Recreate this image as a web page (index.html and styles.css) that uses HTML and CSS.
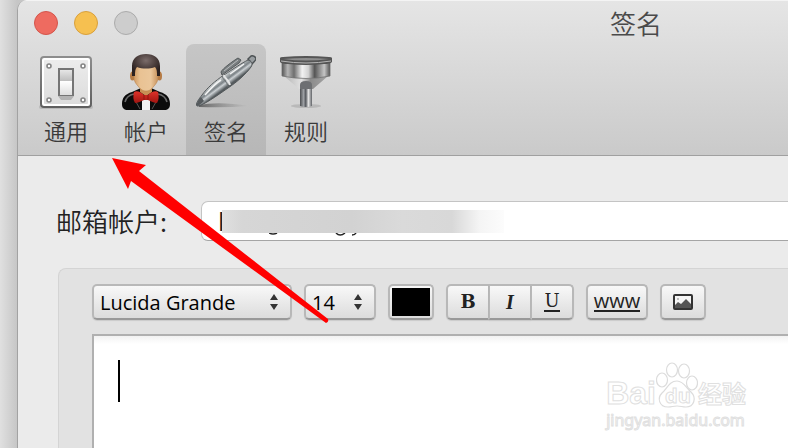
FILE: index.html
```
<!DOCTYPE html>
<html lang="zh-CN">

<head>
  <meta charset="UTF-8">
  <meta name="viewport" content="width=device-width, initial-scale=1.0">
  <title>签名</title>
  <link rel="stylesheet" href="styles.css">
</head>

<body>
  <div class="window">
    <header class="header">
      <div class="titlebar">
        <div class="lights">
          <button class="light close" aria-label="关闭"></button>
          <button class="light minimize" aria-label="最小化"></button>
          <button class="light zoom" aria-label="缩放" disabled></button>
        </div>
        <h1 class="title">签名</h1>
      </div>
      <nav class="tabs">
        <button class="tab">
          <svg class="tab-icon" viewBox="0 0 60 60" aria-hidden="true">
            <defs>
              <linearGradient id="plate" x1="0" y1="0" x2="0" y2="1">
                <stop offset="0" stop-color="#ececec"/>
                <stop offset="1" stop-color="#dcdcdc"/>
              </linearGradient>
              <linearGradient id="plateEdge" x1="0" y1="0" x2="0" y2="1">
                <stop offset="0" stop-color="#8d8d8d"/>
                <stop offset="1" stop-color="#5f5f5f"/>
              </linearGradient>
              <linearGradient id="lever" x1="0" y1="0" x2="0" y2="1">
                <stop offset="0" stop-color="#e6e6e6"/>
                <stop offset=".44" stop-color="#bdbdbd"/>
                <stop offset=".45" stop-color="#fff"/>
                <stop offset="1" stop-color="#dedede"/>
              </linearGradient>
            </defs>
            <rect x="3" y="53" width="54" height="4" rx="2" fill="#000" opacity=".12"/>
            <rect x="5" y="5" width="50" height="50" rx="3" fill="#fff" stroke="url(#plateEdge)" stroke-width="2"/>
            <rect x="8" y="8" width="44" height="44" rx="1" fill="url(#plate)"/>
            <g fill="#fff" stroke="#858585" stroke-width="1.6">
              <circle cx="13" cy="14" r="2"/>
              <circle cx="47" cy="14" r="2"/>
              <circle cx="13" cy="48" r="2"/>
              <circle cx="47" cy="48" r="2"/>
            </g>
            <path d="M22 44h16l-3 4H25z" fill="#888" opacity=".5"/>
            <rect x="22" y="16" width="16" height="28" fill="#757575"/>
            <rect x="24" y="18" width="12" height="25" fill="url(#lever)"/>
          </svg>
          <span>通用</span>
        </button>
        <button class="tab">
          <svg class="tab-icon" viewBox="0 0 60 60" aria-hidden="true">
            <defs>
              <linearGradient id="skin" x1="0" y1="0" x2="1" y2="0">
                <stop offset="0" stop-color="#d09a62"/>
                <stop offset=".25" stop-color="#e9c293"/>
                <stop offset=".7" stop-color="#ebc79b"/>
                <stop offset="1" stop-color="#c8935d"/>
              </linearGradient>
              <radialGradient id="hair" cx=".5" cy=".3" r=".6">
                <stop offset="0" stop-color="#7b6c6a"/>
                <stop offset=".6" stop-color="#4a3d3b"/>
                <stop offset="1" stop-color="#2b2120"/>
              </radialGradient>
              <linearGradient id="bow" x1="0" y1="0" x2="0" y2="1">
                <stop offset="0" stop-color="#de3229"/>
                <stop offset="1" stop-color="#a01511"/>
              </linearGradient>
            </defs>
            <path d="M6 52c0-6 3-10 10-12l9-4h10l9 4c7 2 10 6 10 12 0 4-2 6-6 6H12c-4 0-6-2-6-6z" fill="#0b0b0b"/>
            <path d="M9 50c1-4 4-7 9-8M51 50c-1-4-4-7-9-8" fill="none" stroke="#696969" stroke-width="1.5"/>
            <path d="M20 50l4 7M40 50l-4 7" stroke="#555" stroke-width="1"/>
            <path d="M26 47h8v11h-8z" fill="#f2f2f2"/>
            <path d="M24 31h12v9l-6 4-6-4z" fill="#c98f55"/>
            <ellipse cx="16.5" cy="24" rx="2.5" ry="4.5" fill="#b57b45"/>
            <ellipse cx="43.5" cy="24" rx="2.5" ry="4.5" fill="#b57b45"/>
            <path d="M18 13h24v13c0 3-2 6-4 8-3 4-5 5-8 5s-5-1-8-5c-2-2-4-5-4-8z" fill="url(#skin)" stroke="#b9834c" stroke-width=".6"/>
            <path d="M16 24V14C16 6 22 2 30 2s14 4 14 12v10h-3c0-4 0-7-2-9-5 2-13 2-18 0-2 2-2 5-2 9z" fill="url(#hair)"/>
            <path d="M18 40c3-2 8 1 10 3h4c2-2 7-5 10-3 1 4 1 8-1 11-3 0-6-2-9-3h-4c-3 1-6 3-9 3-2-3-2-7-1-11z" fill="url(#bow)"/>
            <path d="M28 43v5M32 43v5" stroke="#8f1511" stroke-width="1"/>
          </svg>
          <span>帐户</span>
        </button>
        <button class="tab active" aria-current="page">
          <svg class="tab-icon" viewBox="0 0 60 60" aria-hidden="true">
            <defs>
              <linearGradient id="metal" x1="21" y1="21" x2="33" y2="37" gradientUnits="userSpaceOnUse">
                <stop offset="0" stop-color="#73787a"/>
                <stop offset=".25" stop-color="#dfe2e3"/>
                <stop offset=".42" stop-color="#a6acae"/>
                <stop offset=".55" stop-color="#7c8387"/>
                <stop offset=".66" stop-color="#ccd1d4"/>
                <stop offset=".85" stop-color="#555b5e"/>
              </linearGradient>
              <linearGradient id="penShadow" x1="0" y1="0" x2="1" y2="0">
                <stop offset="0" stop-color="#666"/>
                <stop offset="1" stop-color="#888" stop-opacity="0"/>
              </linearGradient>
            </defs>
            <path d="M3 53q20-4 50 1-24 2-50 1z" fill="url(#penShadow)"/>
            <path d="M25 20C26 17 37 9 42 6l3 2-2 3-17 12z" fill="#797e80" stroke="#555a5c" stroke-width="1"/>
            <path d="M28 19L42 8" stroke="#b9bcbd" stroke-width="1"/>
            <path d="M52 7l3-3c2-1 5 1 5 3 0 1-1 2-4 5z" fill="#989da0" stroke="#4d5254" stroke-width="1.5"/>
            <path d="M1 54c-2-2 2-7 5-11 5-7 13-14 22-20 9-6 18-12 24-15 4 1 5 4 3 7-5 7-14 15-23 21C22 43 5 55 1 54z" fill="url(#metal)" stroke="#54595b" stroke-width="1"/>
            <path d="M28 23c0 4 5 4 6 10" fill="none" stroke="#e5e6e6" stroke-width="2"/>
            <path d="M26 24c1 4 5 5 6 11" fill="none" stroke="#6a6f71" stroke-width="1"/>
            <path d="M1 54c-1-2 1-5 4-9l3 4c-3 3-6 5-7 5z" fill="#565b5e"/>
            <path d="M9 43C16 35 20 31 25 28M34 22l14-10" fill="none" stroke="#f2f3f3" stroke-width="1.5"/>
          </svg>
          <span>签名</span>
        </button>
        <button class="tab">
          <svg class="tab-icon" viewBox="0 0 60 60" aria-hidden="true">
            <defs>
              <linearGradient id="steel" x1="0" y1="0" x2="1" y2="0">
                <stop offset="0" stop-color="#555"/>
                <stop offset=".12" stop-color="#b5b5b5"/>
                <stop offset=".25" stop-color="#6e6e6e"/>
                <stop offset=".42" stop-color="#f2f2f2"/>
                <stop offset=".55" stop-color="#d2d2d2"/>
                <stop offset=".68" stop-color="#555"/>
                <stop offset=".88" stop-color="#c5c5c5"/>
                <stop offset="1" stop-color="#555"/>
              </linearGradient>
              <linearGradient id="cone" x1="0" y1="0" x2="1" y2="0">
                <stop offset="0" stop-color="#b5b5b5"/>
                <stop offset=".4" stop-color="#e2e2e2"/>
                <stop offset=".6" stop-color="#8b8b8b"/>
                <stop offset="1" stop-color="#a5a5a5"/>
              </linearGradient>
              <linearGradient id="pipe" x1="0" y1="0" x2="1" y2="0">
                <stop offset="0" stop-color="#4b4d50"/>
                <stop offset=".3" stop-color="#9da0a4"/>
                <stop offset=".48" stop-color="#55585d"/>
                <stop offset=".7" stop-color="#e5e5e5"/>
                <stop offset="1" stop-color="#606367"/>
              </linearGradient>
            </defs>
            <ellipse cx="30" cy="54" rx="15" ry="2" fill="#000" opacity=".12"/>
            <path d="M8 24q22 5 44 0L37 37H23z" fill="url(#cone)"/>
            <path d="M24 33q0-4 6-4t6 4v5H24z" fill="#6d6f72"/>
            <path d="M24 37h12v17q-6 2-12 0z" fill="url(#pipe)"/>
            <path d="M6 10h48v14q-24 5-48 0z" fill="url(#steel)" stroke="#707070" stroke-width=".8"/>
            <path d="M4 6q0-1 3-1 23-2 46 0 3 0 3 1v4q-2 2-8 2-18 2-36 0-6 0-8-2z" fill="#555"/>
            <path d="M7 7q23-2 46 0-23 3-46 0z" fill="#8e8e8e"/>
            <path d="M5 9q25 4 50 0" fill="none" stroke="#b5b5b5" stroke-width="1"/>
          </svg>
          <span>规则</span>
        </button>
      </nav>
    </header>

    <main class="content">
      <div class="account-row">
        <label for="account">邮箱帐户:</label>
        <div class="account-field">
          <input id="account" type="text" value="l">
          <span class="mask"></span>
          <svg class="descenders" viewBox="0 0 90 4" aria-hidden="true">
            <path d="M0 0q4 2 8 0M67 0q4 4 9 0M83 2q3 0 4-2" fill="none" stroke="#222" stroke-width="1.5"/>
          </svg>
        </div>
      </div>

      <section class="panel">
        <div class="toolbar">
          <div class="picker font-picker">
            <select aria-label="字体">
              <option>Lucida Grande</option>
            </select>
            <svg class="arrows" viewBox="0 0 10 18" aria-hidden="true">
              <path d="M5 1l4 6H1zM5 17l4-6H1z" fill="#333"/>
            </svg>
          </div>
          <div class="picker size-picker">
            <select aria-label="字号">
              <option>14</option>
            </select>
            <svg class="arrows" viewBox="0 0 10 18" aria-hidden="true">
              <path d="M5 1l4 6H1zM5 17l4-6H1z" fill="#333"/>
            </svg>
          </div>
          <button class="tool color" aria-label="文字颜色"><span class="swatch"></span></button>
          <div class="group">
            <button class="tool bold">B</button>
            <button class="tool italic">I</button>
            <button class="tool underline"><span>U</span></button>
          </div>
          <button class="tool link"><span>www</span></button>
          <button class="tool image" aria-label="插入图片">
            <svg width="20" height="16" viewBox="0 0 20 16" aria-hidden="true">
              <rect x="1" y="1" width="18" height="14" rx="1" fill="#f5f5f5" stroke="#333" stroke-width="2"/>
              <path d="M2 11l3-3 3 2 5-5 5 5v4H2z" fill="#555"/>
              <circle cx="5" cy="5" r="1" fill="#aaa"/>
            </svg>
          </button>
        </div>
        <div class="editor">
          <textarea aria-label="签名内容"></textarea>
          <span class="caret"></span>
        </div>
      </section>
    </main>
  </div>

  <svg class="pointer" viewBox="0 0 218 168" aria-hidden="true">
    <path d="M0 0L34 7l-7 6 189 148q1 3-2 4L19 23l-3 8z" fill="#f00"/>
  </svg>

  <div class="watermark">
    <div class="brand">
      <span class="brand-latin">Bai</span>
      <span class="paw">
        <svg viewBox="0 0 42 46" aria-hidden="true">
          <g fill="#fff" stroke="#dcdcdc" stroke-width="1.2">
            <ellipse cx="6" cy="18" rx="5.5" ry="7"/>
            <ellipse cx="16" cy="8" rx="5.5" ry="7"/>
            <ellipse cx="28" cy="9" rx="5.5" ry="7"/>
            <ellipse cx="36" cy="21" rx="5.5" ry="7"/>
            <path d="M21 19c7 0 9 7 14 11 6 6 3 15-5 15-4 0-5-1-9-1s-5 1-9 1c-9 0-11-9-6-14 5-4 7-12 15-12z"/>
          </g>
        </svg>
        <span class="paw-text">du</span>
      </span>
      <span class="brand-cjk">经验</span>
    </div>
    <div class="site">jingyan.baidu.com</div>
  </div>
</body>

</html>
```

FILE: styles.css
```
* {
  box-sizing: border-box;
}

body {
  margin: 0;
  height: 100vh;
  padding-left: 17px;
  overflow: hidden;
  position: relative;
  background: linear-gradient(to right, #e0e0e0 0, #c6c6c6 17px);
  font-family: "Open Sans", "Noto Sans CJK SC", sans-serif;
  color: #222;
}

button {
  margin: 0;
  padding: 0;
  border: none;
  background: none;
  font-family: inherit;
  color: inherit;
}

.window {
  display: flex;
  flex-direction: column;
  height: 100%;
  border-left: 1px solid #a2a2a2;
  border-top-left-radius: 10px;
  background: #ebebeb;
  overflow: hidden;
}

/* 标题栏和工具栏 */
.header {
  border-top: 1px solid #f4f4f4;
  border-bottom: 1px solid #a0a0a0;
  background: linear-gradient(#e5e5e5, #cacaca);
}

.titlebar {
  display: flex;
  align-items: center;
  justify-content: space-between;
  height: 43px;
  padding: 0 126px 0 16px;
}

.lights {
  display: flex;
  gap: 16px;
}

.light {
  width: 24px;
  height: 24px;
  border: 1px solid;
  border-radius: 50%;
}

.close {
  background: #ee6b60;
  border-color: #d4554b;
}

.minimize {
  background: #f6c050;
  border-color: #d9a03c;
}

.zoom {
  background: #cdcdcd;
  border-color: #ababab;
}

.title {
  margin: 0;
  font-family: "Noto Sans CJK SC", sans-serif;
  font-size: 26px;
  font-weight: 350;
  line-height: 40px;
  color: #4a4a4a;
}

.tabs {
  display: flex;
  padding-left: 8px;
}

.tab {
  display: flex;
  flex-direction: column;
  align-items: center;
  width: 80px;
  height: 111px;
  padding-top: 8px;
  border-radius: 8px 8px 0 0;
  font-family: "Noto Sans CJK SC", sans-serif;
  font-size: 22px;
  font-weight: 350;
  line-height: 36px;
  color: #3a3a3a;
}

.tab.active {
  background: linear-gradient(#c6c6c6, #b7b7b7);
}

.tab-icon {
  width: 60px;
  height: 60px;
}

/* 内容区 */
.content {
  display: flex;
  flex-direction: column;
  flex: 1;
  padding: 45px 0 0 38px;
}

.account-row {
  display: flex;
  align-items: center;
  gap: 34px;
}

.account-row label {
  font-family: "Noto Sans CJK SC", sans-serif;
  font-size: 26px;
  font-weight: 350;
  line-height: 40px;
}

.account-field {
  flex: 1;
  position: relative;
}

.account-field input {
  display: block;
  width: 100%;
  height: 40px;
  padding: 0 16px;
  border: 1px solid #c4c4c4;
  border-right: none;
  border-bottom-color: #a5a5a5;
  border-radius: 7px 0 0 7px;
  background: #fff;
  font-family: "Open Sans", sans-serif;
  font-size: 26px;
  color: #222;
  outline: none;
}

.mask {
  position: absolute;
  left: 21px;
  top: 9px;
  width: 282px;
  height: 23px;
  background: linear-gradient(to right, #e0e0e0 0, #d6d6d6 20px, #d2d2d2 130px, #dadada 180px, #d8d8d8 230px, #f5f5f5 258px, #fcfcfc 282px);
}

.descenders {
  position: absolute;
  left: 68px;
  top: 32px;
  width: 90px;
  height: 4px;
}

.panel {
  display: flex;
  flex-direction: column;
  flex: 1;
  margin: 27px 0 0 2px;
  padding: 15px 0 0 33px;
  border: 1px solid #d4d4d4;
  border-width: 1px 0 0 1px;
  border-top-left-radius: 8px;
  background: #e2e2e2;
}

.toolbar {
  display: flex;
  gap: 12px;
  margin-bottom: 14px;
}

.picker {
  position: relative;
}

.font-picker {
  width: 200px;
}

.size-picker {
  width: 72px;
}

.picker select,
.tool {
  height: 36px;
  border: 2px solid #b8b8b8;
  border-bottom-color: #999;
  border-radius: 5px;
  background: linear-gradient(#f8f8f8, #dcdcdc);
  box-shadow: 0 1px 1px rgba(0, 0, 0, 0.1);
}

.picker select {
  display: block;
  width: 100%;
  padding: 0 0 0 6px;
  appearance: none;
  font-family: "Open Sans", sans-serif;
  font-size: 20px;
  color: #000;
}

.arrows {
  position: absolute;
  right: 13px;
  top: 9px;
  width: 10px;
  height: 18px;
  pointer-events: none;
}

.tool {
  display: flex;
  align-items: center;
  justify-content: center;
  width: 46px;
  font-size: 20px;
  line-height: 24px;
}

.swatch {
  width: 38px;
  height: 28px;
  background: #000;
}

.group {
  display: flex;
  width: 128px;
}

.group .tool {
  flex: 1;
  font-family: "DejaVu Serif", serif;
  font-size: 18px;
}

.group .tool + .tool {
  border-left-width: 1px;
  border-top-left-radius: 0;
  border-bottom-left-radius: 0;
}

.group .tool:not(:last-child) {
  border-right-width: 1px;
  border-top-right-radius: 0;
  border-bottom-right-radius: 0;
}

.group .bold,
.group .italic {
  font-weight: bold;
}

.group .italic {
  font-family: "Liberation Serif", serif;
  font-size: 20px;
  font-style: italic;
}

.underline span,
.link span {
  line-height: 18px;
  border-bottom: 2px solid #222;
}

.link {
  width: 62px;
}

.editor {
  display: flex;
  flex: 1;
  position: relative;
}

.editor textarea {
  flex: 1;
  padding: 24px;
  border: 2px solid #b0b0b0;
  border-width: 2px 0 0 2px;
  background: linear-gradient(#f2f2f2, #fff 8px);
  font-family: "Open Sans", sans-serif;
  font-size: 28px;
  resize: none;
  outline: none;
}

.caret {
  position: absolute;
  left: 26px;
  top: 26px;
  width: 2px;
  height: 42px;
  background: #000;
}

/* 指向“通用”的箭头 */
.pointer {
  position: absolute;
  left: 112px;
  top: 158px;
  width: 218px;
  height: 168px;
  pointer-events: none;
}

.watermark {
  position: absolute;
  right: 42px;
  bottom: 16px;
  color: #fff;
  -webkit-text-stroke: 1px #e0e0e0;
  pointer-events: none;
}

.brand {
  display: flex;
  align-items: flex-end;
  font-size: 32px;
  font-weight: bold;
  line-height: 30px;
}

.brand-latin {
  font-family: "Liberation Sans", sans-serif;
}

.brand-cjk {
  font-family: "Noto Sans CJK SC", sans-serif;
  font-size: 24px;
}

.paw {
  position: relative;
  width: 42px;
  height: 46px;
}

.paw-text {
  position: absolute;
  left: 9px;
  top: 24px;
  font-size: 20px;
  line-height: 20px;
}

.site {
  font-family: "Noto Sans", sans-serif;
  font-size: 16px;
  line-height: 24px;
}
```
